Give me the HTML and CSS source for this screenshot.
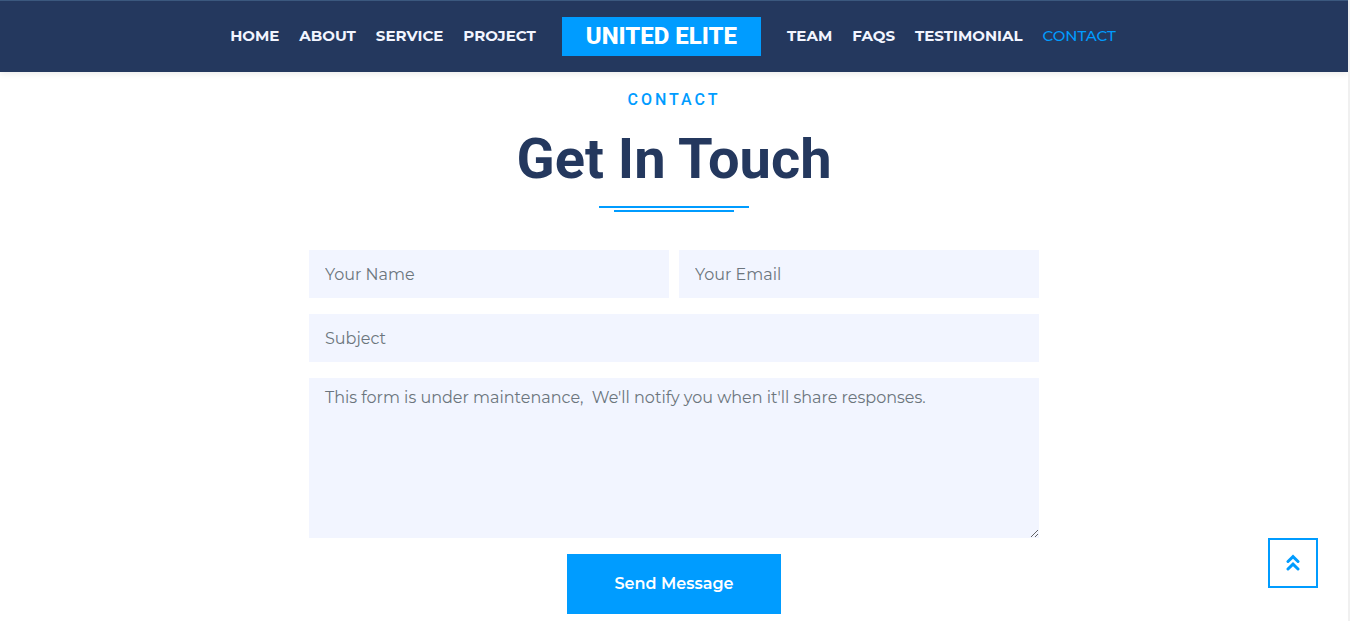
FILE: index.html
```html
<!DOCTYPE html>
<html lang="en">
<head>
<meta charset="utf-8">
<meta name="viewport" content="width=device-width, initial-scale=1">
<title>United Elite - Contact</title>
<link rel="stylesheet" href="styles.css">
</head>
<body>
<header class="site-header">
  <nav class="nav" aria-label="Main">
    <div class="nav-group">
      <a class="nav-link" href="#home">HOME</a>
      <a class="nav-link" href="#about">ABOUT</a>
      <a class="nav-link" href="#service">SERVICE</a>
      <a class="nav-link" href="#project">PROJECT</a>
    </div>
    <a class="brand" href="#home">UNITED ELITE</a>
    <div class="nav-group">
      <a class="nav-link" href="#team">TEAM</a>
      <a class="nav-link" href="#faqs">FAQS</a>
      <a class="nav-link" href="#testimonial">TESTIMONIAL</a>
      <a class="nav-link active" href="#contact" aria-current="page">CONTACT</a>
    </div>
  </nav>
</header>
<main class="contact" id="contact">
  <p class="eyebrow">CONTACT</p>
  <h1 class="title">Get In Touch</h1>
  <div class="rule"></div>
  <form class="form">
    <input class="field" type="text" placeholder="Your Name" aria-label="Your Name">
    <input class="field" type="email" placeholder="Your Email" aria-label="Your Email">
    <input class="field wide" type="text" placeholder="Subject" aria-label="Subject">
    <textarea class="field wide message" placeholder="This form is under maintenance,&nbsp; We'll notify you when it'll share responses." aria-label="Message"></textarea>
    <button class="send" type="button">Send Message</button>
  </form>
</main>
<a class="to-top" href="#home" aria-label="Back to top">
  <svg width="14" height="18" viewBox="0 0 14 18" fill="none" stroke="currentColor" stroke-width="3" stroke-linecap="round" stroke-linejoin="miter"><path d="M2 7.500 7 2.700 12 7.500M2 15 7 10.200 12 15"/></svg>
</a>
</body>
</html>
```
FILE: styles.css
```css
:root {
  --blue: #009cff;
  --navy: #24385e;
  --body-font: Montserrat, Inter, "Liberation Sans", sans-serif;
}
* { box-sizing: border-box; }
html { background: #f0f0f0; overflow: hidden; }
body {
  margin: 0 2px 0 0;
  min-height: 100vh;
  background: #fff;
  font-family: var(--body-font);
  font-size: 16px;
}
.site-header {
  background: var(--navy);
  border-top: 1px solid #3b587e;
  box-shadow: 0 2px 6px rgba(0, 0, 0, .08);
}
.nav {
  display: flex;
  justify-content: center;
  align-items: center;
  gap: 26px;
  padding: 16px 18px 16px 16px;
}
.nav-group { display: flex; gap: 20px; }
.nav-link {
  padding-bottom: 1px;
  color: #f2f5ff;
  font-size: 15px;
  font-weight: 700;
  line-height: 20px;
  text-decoration: none;
}
.nav-link.active { color: var(--blue); font-weight: 500; }
.brand {
  padding: 0 24px;
  background: var(--blue);
  color: #fff;
  font: 800 24px/39px Roboto, sans-serif;
  text-decoration: none;
  white-space: nowrap;
}
.contact { padding: 16px 16px 7px; text-align: center; }
.eyebrow {
  margin: 0;
  color: var(--blue);
  font: 500 16px/24px Roboto, sans-serif;
  letter-spacing: 3px;
}
.title {
  margin: 13px 0 13px;
  color: var(--navy);
  font: 700 56px/68px Roboto, sans-serif;
}
.rule {
  width: 150px;
  height: 6px;
  margin: 0 auto 38px;
  border-top: 2px solid var(--blue);
}
.rule::after {
  content: "";
  display: block;
  height: 2px;
  margin: 2px 15px 0;
  background: var(--blue);
}
.form {
  display: grid;
  grid-template-columns: 1fr 1fr;
  gap: 16px 10px;
  max-width: 730px;
  margin: 0 auto;
}
.field {
  width: 100%;
  height: 48px;
  padding: 8px 16px;
  border: 0;
  border-radius: 0;
  background: #f2f5ff;
  color: #24385e;
  font: 400 16px/24px var(--body-font);
}
.field::placeholder { color: #6c757d; opacity: 1; }
.wide { grid-column: 1 / -1; }
.message { display: block; height: 160px; resize: vertical; }
.send {
  grid-column: 1 / -1;
  justify-self: center;
  padding: 18px 48px;
  border: 0;
  background: var(--blue);
  color: #fff;
  font: 600 16px/24px var(--body-font);
}
.to-top {
  position: fixed;
  right: 32px;
  bottom: 33px;
  display: grid;
  place-items: center;
  width: 50px;
  height: 50px;
  border: 2px solid var(--blue);
  background: #fff;
  color: var(--blue);
}
```
